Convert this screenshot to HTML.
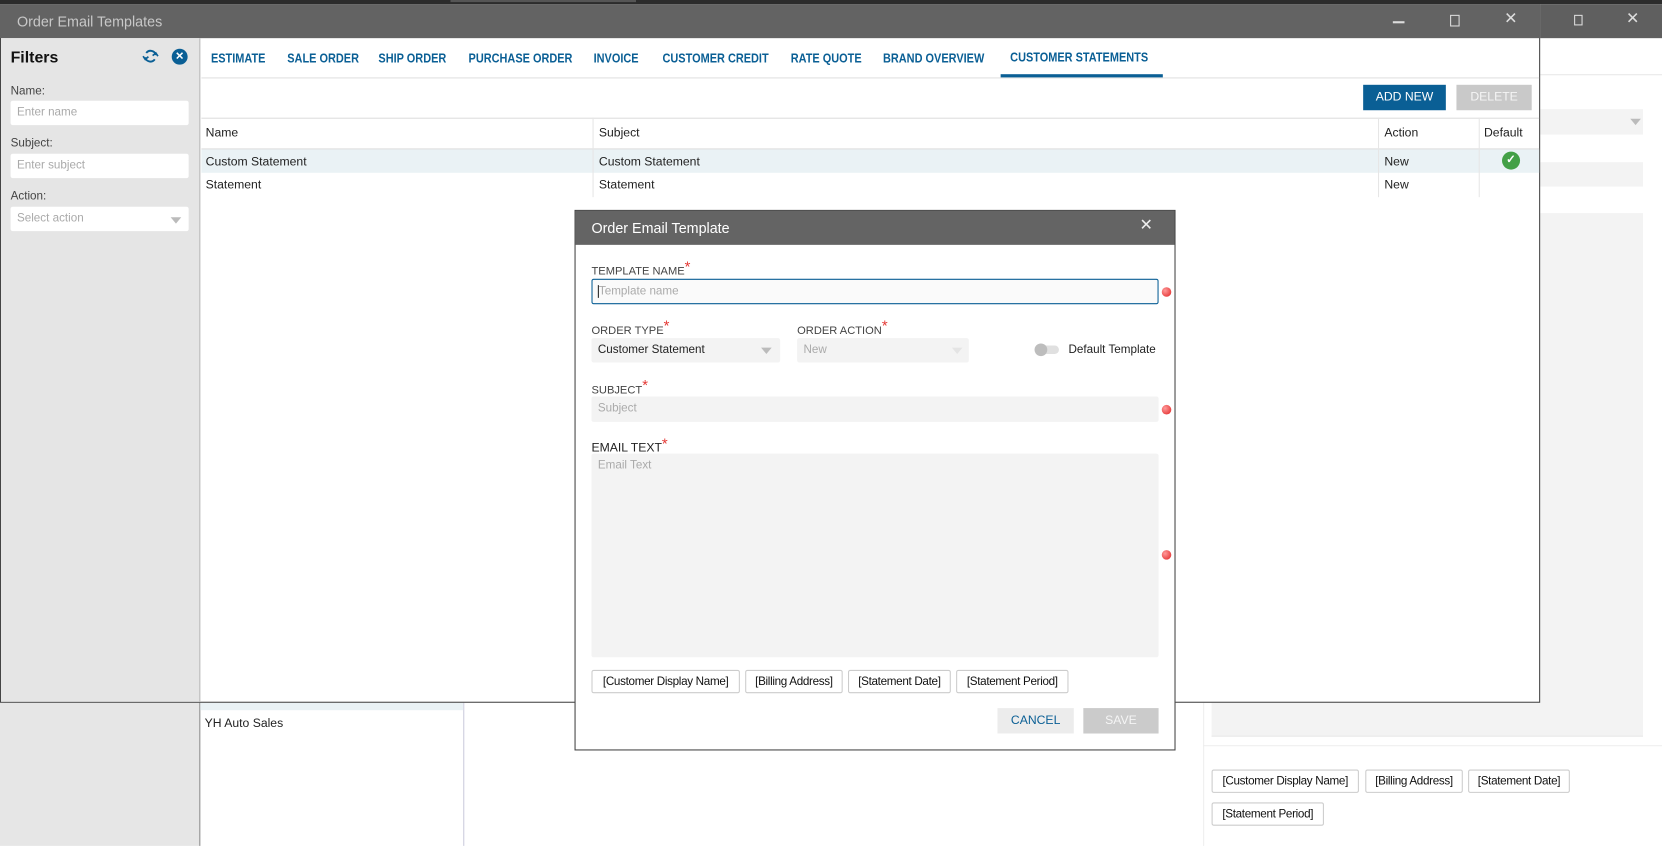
<!DOCTYPE html>
<html><head><meta charset="utf-8"><style>
*{box-sizing:border-box;margin:0;padding:0}
html,body{width:1662px;height:846px;overflow:hidden;background:#fff;font-family:"Liberation Sans",sans-serif;}
#w{position:absolute;left:0;top:0;width:1568px;height:798px;transform:scale(1.06);transform-origin:0 0;}
.a{position:absolute}
.t{position:absolute;white-space:nowrap;font-size:11.5px;color:#222;line-height:14px}
.tab{position:absolute;top:48px;font-size:12px;font-weight:bold;color:#0a5f95;white-space:nowrap;transform:scaleX(0.86);transform-origin:0 0}
.lbl{position:absolute;font-size:10.5px;color:#444;white-space:nowrap}
.lbl b{color:#e53935;font-weight:normal;font-size:14px;position:relative;top:-3px}
.inp{position:absolute;background:#f3f3f3;border-radius:2px;font-size:11px;color:#aaa;padding-left:6px;line-height:23px}
.chip{position:absolute;height:22px;border:1px solid #ccc;border-radius:2px;font-size:11px;color:#111;line-height:20px;text-align:center;background:#fff;white-space:nowrap;letter-spacing:-0.3px}
.dot{position:absolute;width:9px;height:9px;border-radius:50%;background:radial-gradient(circle at 35% 35%,#ff9a9a,#e02020)}
.arr{position:absolute;width:0;height:0;border-left:5px solid transparent;border-right:5px solid transparent;border-top:6px solid #bbb}
</style></head><body><div id="w">
<div class="a" style="left:0;top:0;width:1568px;height:4px;background:#2c2c2c"></div>
<div class="a" style="left:425px;top:0;width:175px;height:2px;background:#555"></div>
<div class="a" style="left:1452px;top:4px;width:116px;height:32px;background:#5f5f5f"></div>
<div class="a" style="left:1485px;top:14px;width:8px;height:10px;border:1.5px solid #ddd"></div>
<div class="t" style="left:1534px;top:11px;color:#ddd;font-size:15px">✕</div>
<div class="a" style="left:1452px;top:70px;width:116px;height:1px;background:#e8e8e8"></div>
<div class="a" style="left:1143px;top:103px;width:407px;height:24px;background:#f3f3f3"></div>
<div class="arr" style="left:1538px;top:112px"></div>
<div class="a" style="left:1143px;top:153px;width:407px;height:23px;background:#f3f3f3"></div>
<div class="a" style="left:1143px;top:201px;width:407px;height:494px;background:#f3f3f3;border-bottom:1px solid #e8e8e8"></div>
<div class="a" style="left:1135px;top:662px;width:1px;height:136px;background:#eee"></div>
<div class="a" style="left:1135px;top:703px;width:433px;height:1px;background:#eee"></div>
<div class="chip" style="left:1143px;top:726px;width:139px">[Customer Display Name]</div>
<div class="chip" style="left:1288px;top:726px;width:92px">[Billing Address]</div>
<div class="chip" style="left:1385px;top:726px;width:96px">[Statement Date]</div>
<div class="chip" style="left:1143px;top:757px;width:106px">[Statement Period]</div>
<div class="a" style="left:0;top:662px;width:188px;height:136px;background:#e6e6e6"></div>
<div class="a" style="left:188px;top:662px;width:250px;height:136px;background:#fff;border-left:1px solid #888;border-right:1px solid #ccd"></div>
<div class="a" style="left:189px;top:662px;width:248px;height:8px;background:#eaf2f5"></div>
<div class="t" style="left:193px;top:676px">YH Auto Sales</div>
<div class="a" style="left:0;top:4px;width:1453px;height:659px;border:1px solid #444;background:#fff"></div>
<div class="a" style="left:0;top:4px;width:1453px;height:32px;background:#636363"></div>
<div class="t" style="left:16px;top:13px;color:#c8c8c8;font-size:13.5px;line-height:16px">Order Email Templates</div>
<div class="a" style="left:1314px;top:20px;width:11px;height:1.5px;background:#ddd"></div>
<div class="a" style="left:1368px;top:14px;width:9px;height:11px;border:1.5px solid #ddd"></div>
<div class="t" style="left:1419px;top:11px;color:#ddd;font-size:15px">✕</div>
<div class="a" style="left:1px;top:36px;width:188px;height:626px;background:#e5e5e5;border-right:1px solid #bbb"></div>
<div class="t" style="left:10px;top:46px;font-size:15px;font-weight:bold;color:#111;line-height:18px">Filters</div>
<svg class="a" style="left:134px;top:45px" width="16" height="16" viewBox="0 0 16 16"><path d="M3 9a5 5 0 0 0 9 2M13 7a5 5 0 0 0-9-2" fill="none" stroke="#0a5f95" stroke-width="1.8"/><path d="M1 8l2 3 3-2.5M15 8l-2-3-3 2.5" fill="none" stroke="#0a5f95" stroke-width="1.6"/></svg>
<div class="a" style="left:162px;top:46px;width:15px;height:15px;border-radius:50%;background:#0a5f95;color:#fff;font-size:10px;text-align:center;line-height:15px;font-weight:bold">✕</div>
<div class="t" style="left:10px;top:79px;font-size:11px;color:#444">Name:</div>
<div class="inp" style="left:10px;top:95px;width:168px;height:23px;background:#fff">Enter name</div>
<div class="t" style="left:10px;top:128px;font-size:11px;color:#444">Subject:</div>
<div class="inp" style="left:10px;top:145px;width:168px;height:23px;background:#fff">Enter subject</div>
<div class="t" style="left:10px;top:178px;font-size:11px;color:#444">Action:</div>
<div class="inp" style="left:10px;top:195px;width:168px;height:23px;background:#fff">Select action</div>
<div class="arr" style="left:161px;top:205px"></div>
<div class="tab" style="left:199px">ESTIMATE</div>
<div class="tab" style="left:271px">SALE ORDER</div>
<div class="tab" style="left:357px">SHIP ORDER</div>
<div class="tab" style="left:442px">PURCHASE ORDER</div>
<div class="tab" style="left:560px">INVOICE</div>
<div class="tab" style="left:625px">CUSTOMER CREDIT</div>
<div class="tab" style="left:746px">RATE QUOTE</div>
<div class="tab" style="left:833px">BRAND OVERVIEW</div>
<div class="tab" style="left:953px;top:47px">CUSTOMER STATEMENTS</div>
<div class="a" style="left:190px;top:73px;width:1262px;height:1px;background:#e0e0e0"></div>
<div class="a" style="left:944px;top:70px;width:153px;height:3px;background:#0a5f95"></div>
<div class="a" style="left:1286px;top:80px;width:78px;height:24px;background:#0a5f95;color:#fff;font-size:11.5px;text-align:center;line-height:24px">ADD NEW</div>
<div class="a" style="left:1374px;top:80px;width:71px;height:24px;background:#c9c9c9;color:#f5f5f5;font-size:11.5px;text-align:center;line-height:24px">DELETE</div>
<div class="a" style="left:190px;top:111px;width:1262px;height:1px;background:#ddd"></div>
<div class="a" style="left:190px;top:140px;width:1262px;height:1px;background:#ddd"></div>
<div class="a" style="left:190px;top:141px;width:1262px;height:22px;background:#eaf2f5"></div>
<div class="a" style="left:559px;top:111px;width:1px;height:75px;background:#e6e6e6"></div>
<div class="a" style="left:1300px;top:111px;width:1px;height:75px;background:#e6e6e6"></div>
<div class="a" style="left:1395px;top:111px;width:1px;height:75px;background:#e6e6e6"></div>
<div class="t" style="left:194px;top:119px">Name</div>
<div class="t" style="left:565px;top:119px">Subject</div>
<div class="t" style="left:1306px;top:119px">Action</div>
<div class="t" style="left:1400px;top:119px">Default</div>
<div class="t" style="left:194px;top:146px">Custom Statement</div>
<div class="t" style="left:565px;top:146px">Custom Statement</div>
<div class="t" style="left:1306px;top:146px">New</div>
<div class="a" style="left:1417px;top:143px;width:17px;height:17px;border-radius:50%;background:#43a047;color:#fff;font-size:11px;text-align:center;line-height:17px;font-weight:bold">✓</div>
<div class="t" style="left:194px;top:168px">Statement</div>
<div class="t" style="left:565px;top:168px">Statement</div>
<div class="t" style="left:1306px;top:168px">New</div>
<div class="a" style="left:542px;top:198px;width:567px;height:510px;border:1px solid #444;background:#fff"></div>
<div class="a" style="left:543px;top:199px;width:565px;height:32px;background:#646464"></div>
<div class="t" style="left:558px;top:208px;color:#fff;font-size:13.5px;line-height:16px">Order Email Template</div>
<div class="t" style="left:1075px;top:206px;color:#eee;font-size:15px">✕</div>
<div class="lbl" style="left:558px;top:246px">TEMPLATE NAME<b>*</b></div>
<div class="inp" style="left:558px;top:263px;width:535px;height:24px;background:#fafafa;border:1px solid #0a5f95;line-height:22px;padding-left:5px"><span style="border-left:1px solid #222">Template name</span></div>
<div class="dot" style="left:1096px;top:271px"></div>
<div class="lbl" style="left:558px;top:302px">ORDER TYPE<b>*</b></div>
<div class="lbl" style="left:752px;top:302px">ORDER ACTION<b>*</b></div>
<div class="inp" style="left:558px;top:319px;width:178px;height:23px;color:#222">Customer Statement</div>
<div class="arr" style="left:718px;top:328px"></div>
<div class="inp" style="left:752px;top:319px;width:162px;height:23px;color:#aaa">New</div>
<div class="arr" style="left:898px;top:328px;border-top-color:#e4e4e4"></div>
<div class="a" style="left:977px;top:326px;width:22px;height:8px;border-radius:4px;background:#e0e0e0"></div>
<div class="a" style="left:976px;top:324px;width:12px;height:12px;border-radius:50%;background:#bdbdbd"></div>
<div class="t" style="left:1008px;top:323px;font-size:11px">Default Template</div>
<div class="lbl" style="left:558px;top:358px">SUBJECT<b>*</b></div>
<div class="inp" style="left:558px;top:374px;width:535px;height:24px">Subject</div>
<div class="dot" style="left:1096px;top:382px"></div>
<div class="lbl" style="left:558px;top:413px;font-size:11.5px;color:#222">EMAIL TEXT<b>*</b></div>
<div class="inp" style="left:558px;top:428px;width:535px;height:192px;line-height:22px">Email Text</div>
<div class="dot" style="left:1096px;top:519px"></div>
<div class="chip" style="left:558px;top:632px;width:140px">[Customer Display Name]</div>
<div class="chip" style="left:703px;top:632px;width:92px">[Billing Address]</div>
<div class="chip" style="left:800px;top:632px;width:97px">[Statement Date]</div>
<div class="chip" style="left:902px;top:632px;width:106px">[Statement Period]</div>
<div class="a" style="left:941px;top:668px;width:72px;height:24px;background:#ececec;color:#0a5f95;font-size:11.5px;text-align:center;line-height:24px">CANCEL</div>
<div class="a" style="left:1022px;top:668px;width:71px;height:24px;background:#cbcbcb;color:#f5f5f5;font-size:11.5px;text-align:center;line-height:24px">SAVE</div>
</div></body></html>
